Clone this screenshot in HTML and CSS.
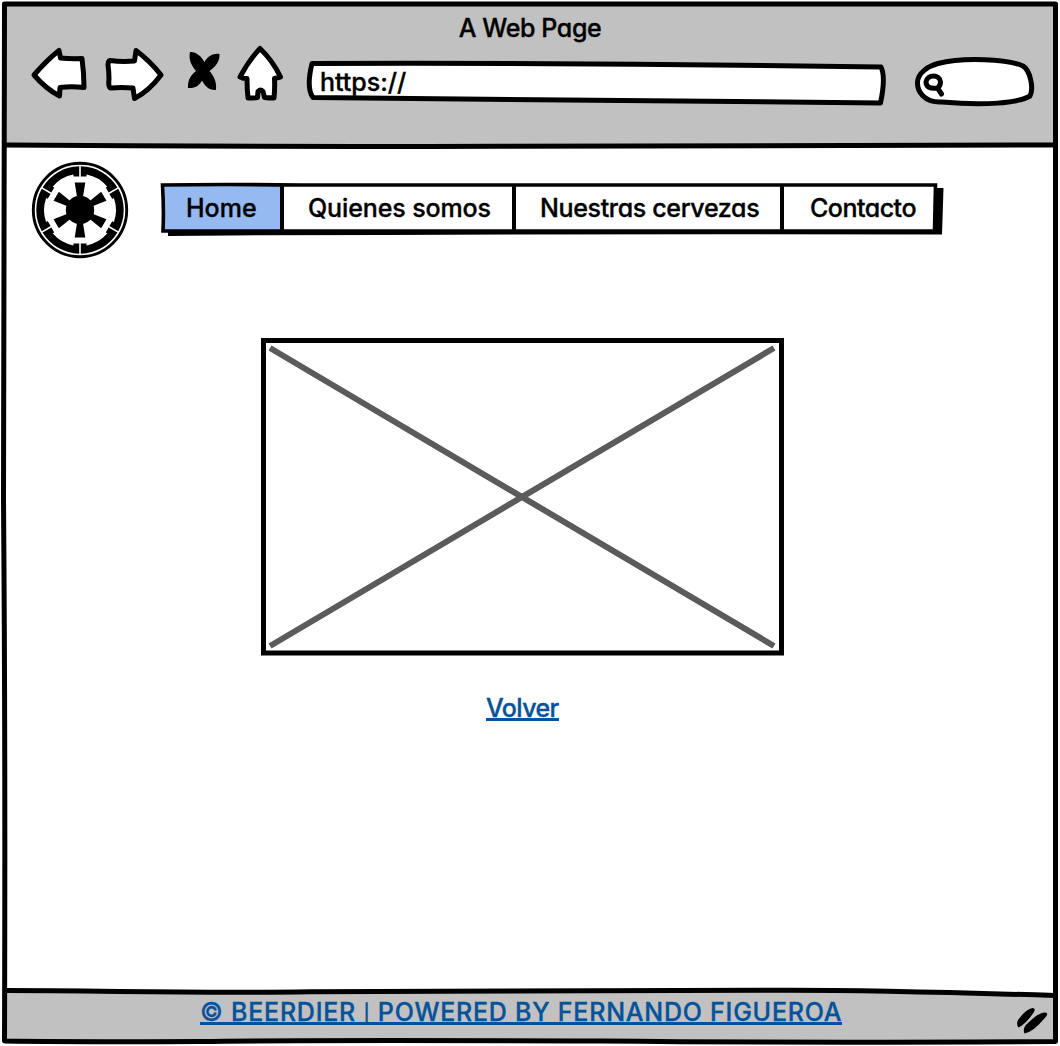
FILE: index.html
```html
<!DOCTYPE html>
<html lang="es">
<head>
<meta charset="utf-8">
<title>A Web Page</title>
<link rel="stylesheet" href="styles.css">
</head>
<body>
<div class="window">
  <header class="chrome">
    <div class="title"><span class="t-title">A Web Page</span></div>
    <div class="toolbar">
      <svg class="icon back" viewBox="30 44 60 60"><path d="M34 75Q47 60 59 50.500L60.500 58Q71 59 82 58.500Q84 73 84 87.500Q71 86 60 87.500L59.500 96Q46 89 34 75Z"/></svg>
      <svg class="icon forward" viewBox="104 44 60 60"><path d="M110 60.500Q122 62 134.500 61L136 50.500Q150 61 161 75Q149 91 134.500 98.500L133 88Q121 87 111 88Q108 88 109 79Q109 72 108 65Q108 61 110 60.500Z"/></svg>
      <svg class="stop" viewBox="186 44 36 60"><path d="M190 52C196 51.500 201 56 204.500 62C208 56 213 53 219.500 54C220 62 215 67 209.500 71C213 75 217 81 216 90C209 90.500 205 86 202 80.500C199 86 195 88.500 188 88C187.500 80 191 75 196 71C191 65 188.500 59 190 52Z"/></svg>
      <svg class="icon home" viewBox="236 44 48 60"><path d="M260 48.500Q249 60 240 77Q243 79 247 78.500Q247 89 248 98Q253 98 257.500 97.500L258 91.500Q260.500 89 263 91.500L264.500 97.500Q269 98 274 98Q275 88 274.500 78.500L280.500 77Q273 61 260 48.500Z"/></svg>
      <div class="address">
        <svg class="sketch" viewBox="306 60 582 46"><path d="M312 63.500Q590 62.500 881 67Q886 77 880.500 103Q600 101.500 313 97.500Q306 88 312 63.500Z"/></svg>
        <span class="t-url">https://</span>
      </div>
      <svg class="icon search" viewBox="912 54 126 54"><path d="M942 102C924 103 917 91 917.500 82C918 73 928 66 938 63.500C963 57 1008 59 1023 66C1030 70 1034 88 1030 96C1018 103 985 106 942 102Z"/><path d="M937.500 88C930 89 926 87 926 82C927 74 940 74 940.500 82Q940.500 86 937.500 88L941.500 94" /></svg>
    </div>
  </header>
  <main class="page">
    <div class="topbar">
      <svg class="logo" viewBox="-49 -49 98 98">
        <defs>
          <g id="sector"><path d="M.8 -43.700A43.700 43.700 0 0 1 37.450 -22.540L28.600 -17.450L25.800 -22.400L27.400 -23.300A36 36 0 0 0 6.500 -35.400V-33.500H.8Z"/><path d="M-2.800 -12L-5.300 -27.500H5.300L2.800 -12Z"/></g>
        </defs>
        <circle r="46.700" fill="none" stroke="#000" stroke-width="2.900"/>
        <circle r="14.200"/>
        <use href="#sector"/><use href="#sector" transform="rotate(60)"/><use href="#sector" transform="rotate(120)"/><use href="#sector" transform="rotate(180)"/><use href="#sector" transform="rotate(240)"/><use href="#sector" transform="rotate(300)"/>
      </svg>
      <nav class="menu">
        <a class="tab active"><span class="t-home">Home</span></a>
        <a class="tab who"><span class="t-who">Quienes somos</span></a>
        <a class="tab beers"><span class="t-beers">Nuestras cervezas</span></a>
        <a class="tab contact"><span class="t-contact">Contacto</span></a>
        <svg class="edge" viewBox="158 178 788 62"><path fill="#000" d="M168 230H935V188H943.500L942 234.500Q600 233.500 230 235.500L168 236Z"/><path fill="none" stroke="#000" stroke-width="3.600" d="M162.500 185Q220 184 300 185H935.500L934.500 231H163Q164 210 162.500 185Z"/></svg>
      </nav>
    </div>
    <svg class="placeholder" viewBox="260 337 524 320"><path class="cross" d="M270 348L774 646M774 348L270 646"/><path class="box" d="M263.500 340.500H781.500V653H263.500Z"/></svg>
    <a class="link"><span class="t-back">Volver</span></a>
  </main>
  <footer class="footer"><a class="link"><span class="t-foot">© BEERDIER <span class="bar">|</span> POWERED BY FERNANDO FIGUEROA</span></a></footer>
  <svg class="frame" viewBox="0 0 1060 1046">
    <path class="fill" d="M4 988Q250 994 500 991Q850 989 1055 995V1041H4Z"/>
    <path d="M4.500 4H1055.500Q1056 500 1055.500 1041.500Q800 1043 600 1041Q300 1040 200 1041.500Q80 1042 4.500 1041Q5.500 750 3.500 500Q4 200 4.500 4Z"/>
    <path d="M5 145Q250 147 500 146.200Q800 144.500 1055 145"/>
    <path d="M5 990.500C110 990.500 190 993.500 310 991.700S600 990.500 780 990.200Q880 990 1055 995.500"/>
  </svg>
  <svg class="grip" viewBox="1012 1004 40 32"><path d="M1032.500 1008Q1026 1009 1018 1020Q1016 1024 1018.500 1027.500Q1026 1024 1034 1012Q1036 1008 1032.500 1008ZM1045.500 1012.500Q1039 1012 1028 1023Q1022 1028 1024.500 1033.500Q1033 1032 1043 1020Q1050 1013 1045.500 1012.500Z"/></svg>
</div>
</body>
</html>
```
FILE: styles.css
```css
* { box-sizing: border-box; }
body { margin: 0; background: #fff; font-family: Inter, "Noto Sans", sans-serif; font-feature-settings: "cv11" 1; font-size: 25px; font-weight: 500; line-height: 30px; color: #000; -webkit-text-stroke: .35px currentColor; }
svg { display: block; flex: none; }
.window { position: relative; width: 1060px; height: 1046px; display: grid; grid-template-rows: 145px 846px 55px; overflow: hidden; }
.chrome { background: #c1c1c1; margin: 3px 4px 0; padding-top: 10px; }
.title { display: flex; justify-content: center; height: 31px; letter-spacing: -.4px; }
.toolbar { display: flex; align-items: flex-start; padding-left: 26px; }
.icon path { fill: #fff; stroke: #000; stroke-width: 5; stroke-linejoin: round; stroke-linecap: round; }
.back, .forward { width: 60px; height: 60px; }
.forward { margin-left: 14px; }
.stop { width: 36px; height: 60px; margin-left: 22px; }
.home { width: 48px; height: 60px; margin-left: 14px; }
.address { display: grid; width: 582px; height: 46px; margin: 16px 0 0 22px; }
.address > * { grid-area: 1 / 1; }
.address span { padding: 7px 0 0 14px; justify-self: start; }
.sketch { width: 582px; height: 46px; }
.sketch path { fill: #fff; stroke: #000; stroke-width: 5; stroke-linejoin: round; }
.search { width: 126px; height: 54px; margin: 10px 0 0 24px; }
.page { display: flex; flex-direction: column; align-items: flex-start; padding: 16px 0 0 31px; }
.topbar { display: flex; height: 98px; }
.logo { width: 98px; height: 98px; }
.menu { position: relative; display: flex; margin: 24px 0 0 33px; width: 774px; height: 46px; }
.tab { display: flex; align-items: center; border-right: 4px solid #000; height: 46px; white-space: nowrap; }
.active { width: 122px; padding-left: 24px; background: #95baf2; }
.who { width: 232px; padding-left: 24px; letter-spacing: -.12px; }
.beers { width: 268px; padding-left: 24px; letter-spacing: -.35px; }
.contact { width: 152px; padding-left: 26px; border-right: 0; letter-spacing: -.5px; }
.edge { position: absolute; left: -4px; top: -7px; width: 788px; height: 62px; }
.placeholder { width: 524px; height: 320px; margin: 78px 0 0 229px; }
.cross { fill: none; stroke: #5b5b5b; stroke-width: 6; }
.box { fill: none; stroke: #000; stroke-width: 5; }
.link { color: #045299; white-space: nowrap; border-bottom: 3px solid #045299; height: 28px; }
.page .link { margin: 36px 0 0 455px; letter-spacing: -.6px; }
.footer { padding: 6px 0 0 200px; display: flex; position: relative; z-index: 1; letter-spacing: .76px; }
.bar { font-size: 18px; line-height: 1; vertical-align: 1px; }
.frame { position: absolute; left: 0; top: 0; width: 1060px; height: 1046px; }
.frame path { fill: none; stroke: #000; stroke-width: 5; stroke-linejoin: round; }
.frame .fill { fill: #c1c1c1; stroke: none; }
.grip { position: absolute; left: 1012px; top: 1004px; width: 40px; height: 32px; }
```
